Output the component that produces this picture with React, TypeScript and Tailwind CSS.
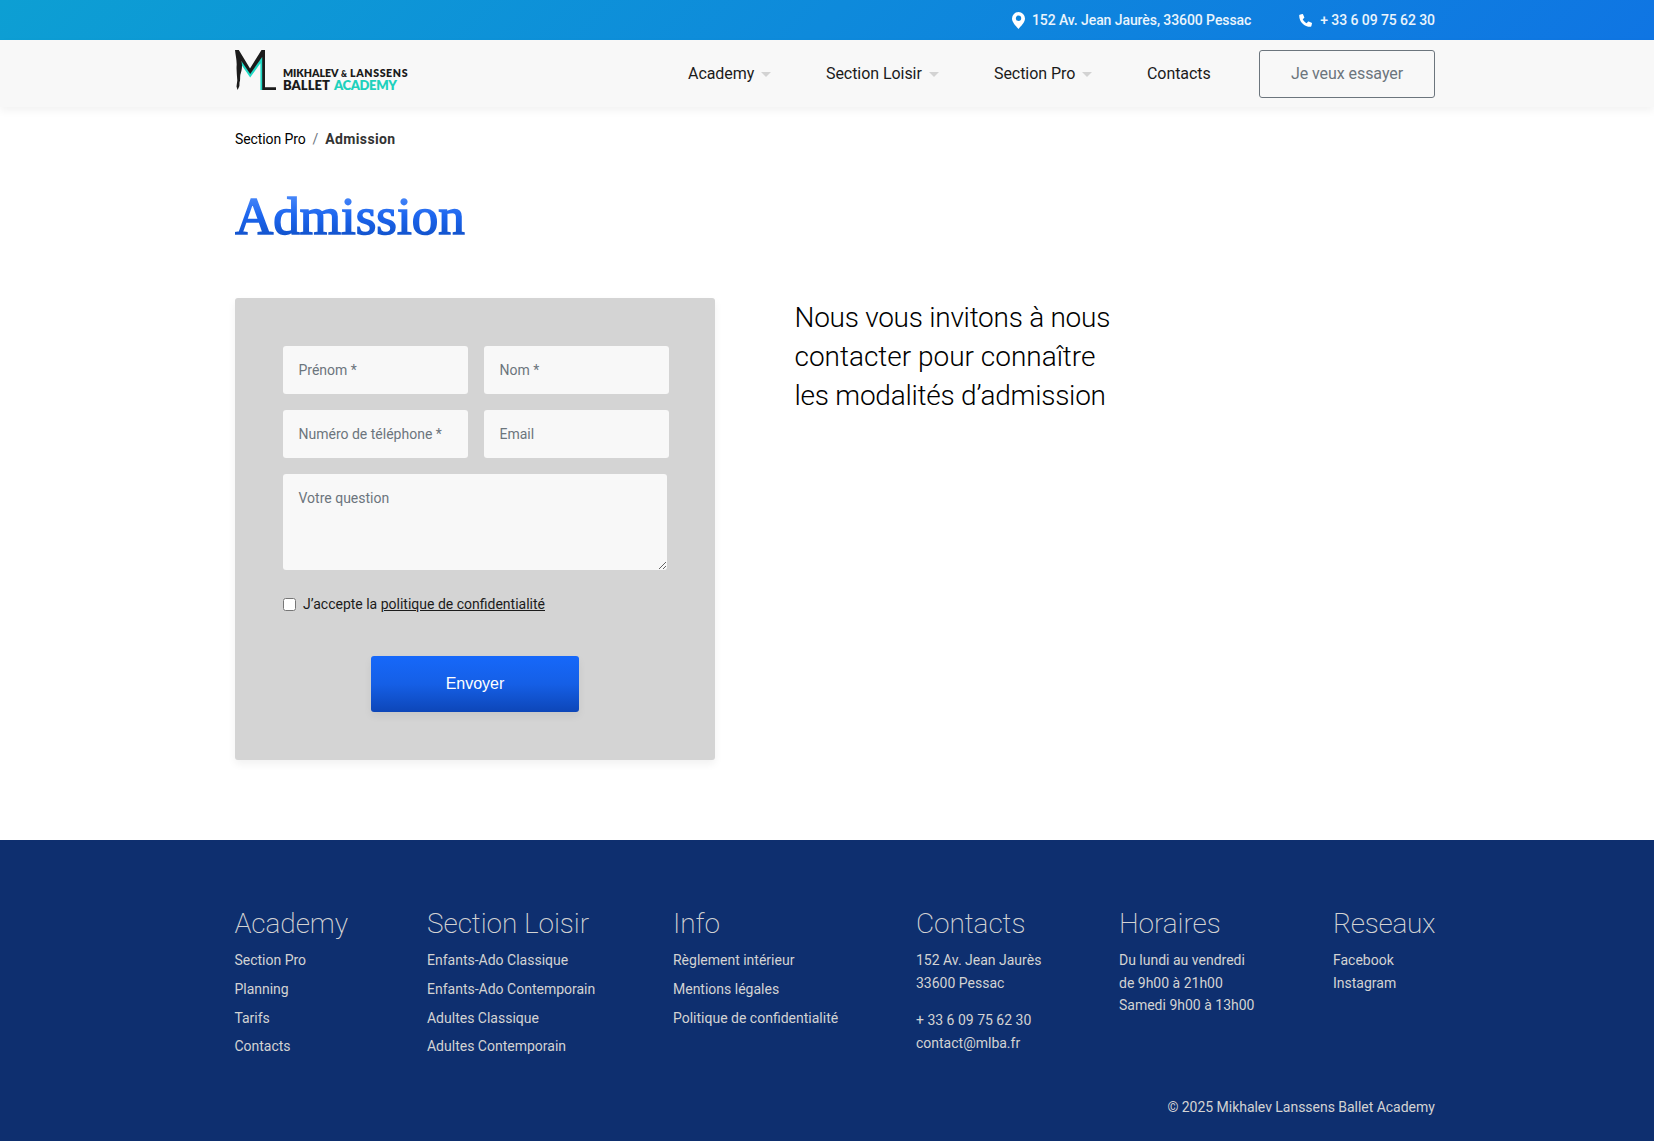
import type { ReactNode } from "react";

const Caret = () => (
  <svg className="ml-[7px] h-[5px] w-[10px]" viewBox="0 0 10 5" fill="#d3d3d3">
    <path d="M0 0h10L5 5z" />
  </svg>
);

const Logo = () => (
  <svg className="block h-[42px] w-[174px]" viewBox="0 0 174 42" fontFamily="Lato, sans-serif">
    <path d="M6 12 15.200 25.500 26.600 9.500V40" fill="none" stroke="#1fd9c5" strokeWidth="2.400" />
    <path
      d="M0 0h3.800L15 18.500 26.500 0H30v37.200h11V40H27.200V7L15.200 24 6.300 11C7.600 15 7 20 5.300 25c-.4 3 .2 5-.8 7.500L4.400 36l-1.800 4-1.100-3.500.8-6C2 25 1.200 20 1.700 14.500 1.600 9 .5 5 0 0z"
      fill="#1b1b1b"
    />
    <g fontWeight="800" fill="#1b1b1b">
      <text x="48" y="26.800" fontSize="10.600" textLength="55.500" lengthAdjust="spacing">MIKHALEV</text>
      <text x="106" y="26.800" fontSize="8.500" textLength="6" lengthAdjust="spacingAndGlyphs">&amp;</text>
      <text x="115" y="26.800" fontSize="10.600" textLength="57.500" lengthAdjust="spacing">LANSSENS</text>
      <text x="48" y="39.800" fontSize="13" textLength="47" lengthAdjust="spacing">BALLET</text>
      <text x="99" y="39.800" fontSize="13" fill="#1fd1bd" textLength="63" lengthAdjust="spacing">ACADEMY</text>
    </g>
  </svg>
);

const NavItem = ({ children, width }: { children: ReactNode; width: string }) => (
  <a className={`flex items-center ${width}`}>
    {children}
    <Caret />
  </a>
);

const field =
  "h-12 w-[185px] rounded-[3px] bg-[#f8f8f8] pl-[15.500px] pr-4 text-sm text-[#1b1b1b] placeholder:text-[#6c757d] placeholder:opacity-100 outline-none";

const LinkColumn = ({ title, links }: { title: string; links: string[] }) => (
  <div>
    <FooterTitle>{title}</FooterTitle>
    <ul className="flex flex-col gap-[6px]">
      {links.map((l) => (
        <li key={l} className="h-[22.800px]">{l}</li>
      ))}
    </ul>
  </div>
);

const FooterTitle = ({ children }: { children: ReactNode }) => (
  <h3 className="mb-[7px] text-[28px] leading-[36px] font-extralight tracking-[-0.08px]">{children}</h3>
);

export default function App() {
  return (
    <div className="flex h-[1141px] flex-col overflow-hidden bg-white font-['Roboto',sans-serif] text-[#1b1b1b]">
      <div className="h-10 shrink-0 bg-[linear-gradient(135deg,#0d9fd3,#0f75e3)]">
        <div className="ml-[235px] flex h-full w-[1200px] items-center justify-end text-sm font-medium tracking-[-0.08px] text-[#eaf4fc]">
          <svg className="mr-[7px] h-[17px] w-[13px]" viewBox="0 0 13 17" fill="#fff">
            <path fillRule="evenodd" d="M6.500 0A6.500 6.500 0 0 0 0 6.500C0 10.500 4.500 14.500 6.500 17 8.500 14.500 13 10.500 13 6.500A6.500 6.500 0 0 0 6.500 0zm0 3.600a2.700 2.700 0 1 1 0 5.400 2.700 2.700 0 0 1 0-5.400z" />
          </svg>
          <span>152 Av. Jean Jaurès, 33600 Pessac</span>
          <svg className="mr-2 ml-[48px] h-[13px] w-[13px]" viewBox="0 0 13 13" fill="#fff">
            <path d="M.7.7 3.300 0c.4-.1.7.1.8.4l1.200 2.900c.1.300 0 .6-.2.800L3.700 5.300c.9 1.800 2.200 3.100 4 4l1.200-1.500c.2-.2.500-.3.800-.2l2.900 1.200c.3.100.5.5.4.800l-.7 2.700c-.1.300-.3.500-.7.500C5.200 12.800.2 7.700.2 1.400c0-.4.200-.6.500-.7z" />
          </svg>
          <span>+ 33 6 09 75 62 30</span>
        </div>
      </div>
      <header className="z-10 h-[67px] shrink-0 bg-[#f8f8f8] shadow-[0_4px_8px_rgba(0,0,0,0.05)]">
        <div className="ml-[235px] flex w-[1200px] items-start pt-[10px]">
          <Logo />
          <nav className="ml-auto flex h-12 items-center text-base tracking-[-0.06px]">
            <NavItem width="w-[138px]">Academy</NavItem>
            <NavItem width="w-[168px]">Section Loisir</NavItem>
            <NavItem width="w-[153px]">Section Pro</NavItem>
            <a className="w-[112px]">Contacts</a>
          </nav>
          <button className="h-12 w-[176px] rounded-[3px] border border-[#6c757d] text-base tracking-[-0.06px] text-[#6c757d]">Je veux essayer</button>
        </div>
      </header>
      <main className="ml-[235px] w-[1200px] grow">
        <nav className="mt-[21px] flex h-[22px] items-center text-sm text-black">
          <span className="tracking-[-0.1px]">Section Pro</span>
          <span className="mx-[7px] text-[#6c757d]">/</span>
          <span className="font-bold tracking-[0.35px] text-[#333]">Admission</span>
        </nav>
        <h1 className="mt-[32px] h-[68px] w-[260px] bg-[linear-gradient(180deg,#4f8dfb_15%,#1c65ee_50%,#0e4cc0_90%)] bg-clip-text font-['Liberation_Serif',serif] text-[53px] leading-[68px] text-transparent [-webkit-text-stroke:1.600px_transparent]">
          Admission
        </h1>
        <div className="mt-12 flex items-start gap-20">
          <form className="h-[462px] w-[480px] rounded-[3px] bg-[#d4d4d4] p-12 shadow-[0_4px_8px_rgba(0,0,0,0.06)]">
            <div className="grid w-[386px] grid-cols-2 gap-4">
              <input className={field} placeholder="Prénom *" />
              <input className={field} placeholder="Nom *" />
              <input className={field} placeholder="Numéro de téléphone *" />
              <input className={field} placeholder="Email" />
            </div>
            <textarea
              className="mt-4 block h-24 w-[384px] resize rounded-[3px] bg-[#f8f8f8] py-[14px] pl-[15.500px] pr-4 text-sm outline-none placeholder:text-[#6c757d] placeholder:opacity-100"
              placeholder="Votre question"
            />
            <label className="mt-[23px] flex h-[22px] items-center text-sm">
              <input type="checkbox" className="mr-[7px] h-[13px] w-[13px]" />
              <span>
                J’accepte la <a className="underline">politique de confidentialité</a>
              </span>
            </label>
            <button
              type="button"
              className="mx-auto mt-[41px] block h-14 w-[208px] rounded-[3px] bg-[linear-gradient(180deg,#1668fa,#155fe6_50%,#0d46b8)] font-['Liberation_Sans',sans-serif] text-base text-white shadow-[0_4px_8px_rgba(0,0,0,0.06)]"
            >
              Envoyer
            </button>
          </form>
          <p className="-ml-[0.500px] text-[28px] leading-[39px] font-light text-black">
            <span className="tracking-[-0.260px]">Nous vous invitons à nous</span>
            <br />
            <span className="tracking-[-0.020px]">contacter pour connaître</span>
            <br />
            <span className="tracking-[-0.240px]">les modalités d’admission</span>
          </p>
        </div>
      </main>
      <footer className="h-[301px] shrink-0 bg-[#0e2f6f] text-[#d3d3d3]">
        <div className="ml-[234.400px] w-[1200.400px] pt-[66px] text-sm leading-[22.700px]">
          <div className="grid h-[190px] grid-cols-[192.600px_246px_243px_203px_214px_1fr]">
            <LinkColumn title="Academy" links={["Section Pro", "Planning", "Tarifs", "Contacts"]} />
            <LinkColumn
              title="Section Loisir"
              links={["Enfants-Ado Classique", "Enfants-Ado Contemporain", "Adultes Classique", "Adultes Contemporain"]}
            />
            <LinkColumn title="Info" links={["Règlement intérieur", "Mentions légales", "Politique de confidentialité"]} />
            <div>
              <FooterTitle>Contacts</FooterTitle>
              <p>152 Av. Jean Jaurès<br />33600 Pessac</p>
              <p className="mt-[15px]">+ 33 6 09 75 62 30<br />contact@mlba.fr</p>
            </div>
            <div>
              <FooterTitle>Horaires</FooterTitle>
              <p>Du lundi au vendredi<br />de 9h00 à 21h00<br />Samedi 9h00 à 13h00</p>
            </div>
            <div>
              <h3 className="mb-[7px] text-[28px] leading-[36px] font-extralight tracking-[-0.3px]">Reseaux</h3>
              <p>Facebook<br />Instagram</p>
            </div>
          </div>
          <p className="text-right tracking-[-0.030px]">© 2025 Mikhalev Lanssens Ballet Academy</p>
        </div>
      </footer>
    </div>
  );
}
